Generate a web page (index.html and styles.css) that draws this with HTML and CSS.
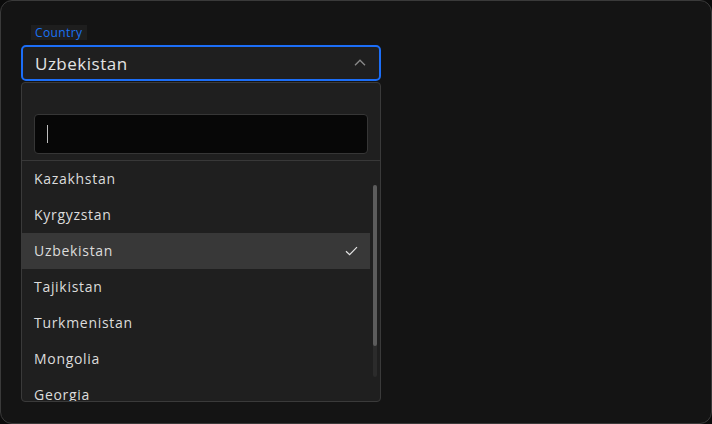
FILE: index.html
```html
<!DOCTYPE html>
<html>
<head>
<meta charset="utf-8">
<link rel="stylesheet" href="styles.css">
</head>
<body>
<div class="card">
  <div class="field">
    <span class="label">Country</span>
    <div class="select">
      <span class="value">Uzbekistan</span>
      <svg class="chev" width="12" height="7" viewBox="0 0 12 7"><path d="M1 6.2 L6 1.2 L11 6.2" fill="none" stroke="#8a8a8a" stroke-width="1.3"/></svg>
    </div>
    <div class="panel">
      <div class="search-wrap">
        <div class="search"><span class="caret"></span></div>
      </div>
      <div class="list-wrap">
        <ul class="list">
          <li class="item">Kazakhstan</li>
          <li class="item">Kyrgyzstan</li>
          <li class="item selected">Uzbekistan
            <svg class="check" width="13" height="10" viewBox="0 0 13 10"><path d="M1 5.2 L4.6 8.6 L12 1.2" fill="none" stroke="#e6e6e6" stroke-width="1.2"/></svg>
          </li>
          <li class="item">Tajikistan</li>
          <li class="item">Turkmenistan</li>
          <li class="item">Mongolia</li>
          <li class="item">Georgia</li>
        </ul>
        <div class="track"><div class="thumb"></div></div>
      </div>
    </div>
  </div>
</div>
</body>
</html>
```

FILE: styles.css
```css
* { box-sizing: border-box; }
html, body { margin: 0; padding: 0; }
body {
  background: #0b0b0b;
  font-family: "Open Sans", "Noto Sans", sans-serif;
  width: 712px;
  height: 424px;
  overflow: hidden;
}
.card {
  width: 712px;
  height: 424px;
  background: #141414;
  border: 1px solid #3a3a3a;
  border-radius: 12px;
  padding: 24px 20px 0 20px;
}
.field {
  width: 360px;
  display: flex;
  flex-direction: column;
}
.label {
  align-self: flex-start;
  margin-left: 10px;
  padding: 0 4px;
  background: #1e1e1e;
  color: #1a73f5;
  font-size: 12px;
  line-height: 15px;
  letter-spacing: 0.4px;
}
.select {
  margin-top: 5px;
  height: 36px;
  border: 2px solid #1c6ef7;
  border-radius: 5px;
  background: #1f1f1f;
  display: flex;
  align-items: center;
  justify-content: space-between;
  padding: 0 13px 0 12px;
}
.value {
  color: #e3e3e3;
  font-size: 17px;
  letter-spacing: 0.5px;
}
.chev { margin-top: -2px; }
.panel {
  margin-top: 1px;
  height: 320px;
  background: #1f1f1f;
  border: 1px solid #3a3a3a;
  border-radius: 4px;
  display: flex;
  flex-direction: column;
  overflow: hidden;
}
.search-wrap {
  padding: 31px 12px 6px 12px;
  border-bottom: 1px solid #383838;
}
.search {
  height: 40px;
  background: #070707;
  border: 1px solid #363636;
  border-radius: 4px;
  display: flex;
  align-items: center;
  padding-left: 12px;
}
.caret {
  width: 1px;
  height: 18px;
  background: #bdbdbd;
}
.list-wrap {
  position: relative;
  flex: 1;
  overflow: hidden;
}
.list {
  list-style: none;
  margin: 0;
  padding: 0;
  width: 348px;
}
.item {
  height: 36px;
  display: flex;
  align-items: center;
  justify-content: space-between;
  padding: 0 12px 2px 12px;
  color: #dcdcdc;
  font-size: 14px;
  letter-spacing: 0.7px;
}
.item.selected { background: #383838; }
.check { margin-top: 2px; }
.track {
  position: absolute;
  left: 351px;
  top: 24px;
  width: 4px;
  height: 192px;
  background: #2b2b2b;
  border-radius: 2px;
}
.thumb {
  width: 4px;
  height: 161px;
  background: #5c5c5c;
  border-radius: 2px;
}
```
